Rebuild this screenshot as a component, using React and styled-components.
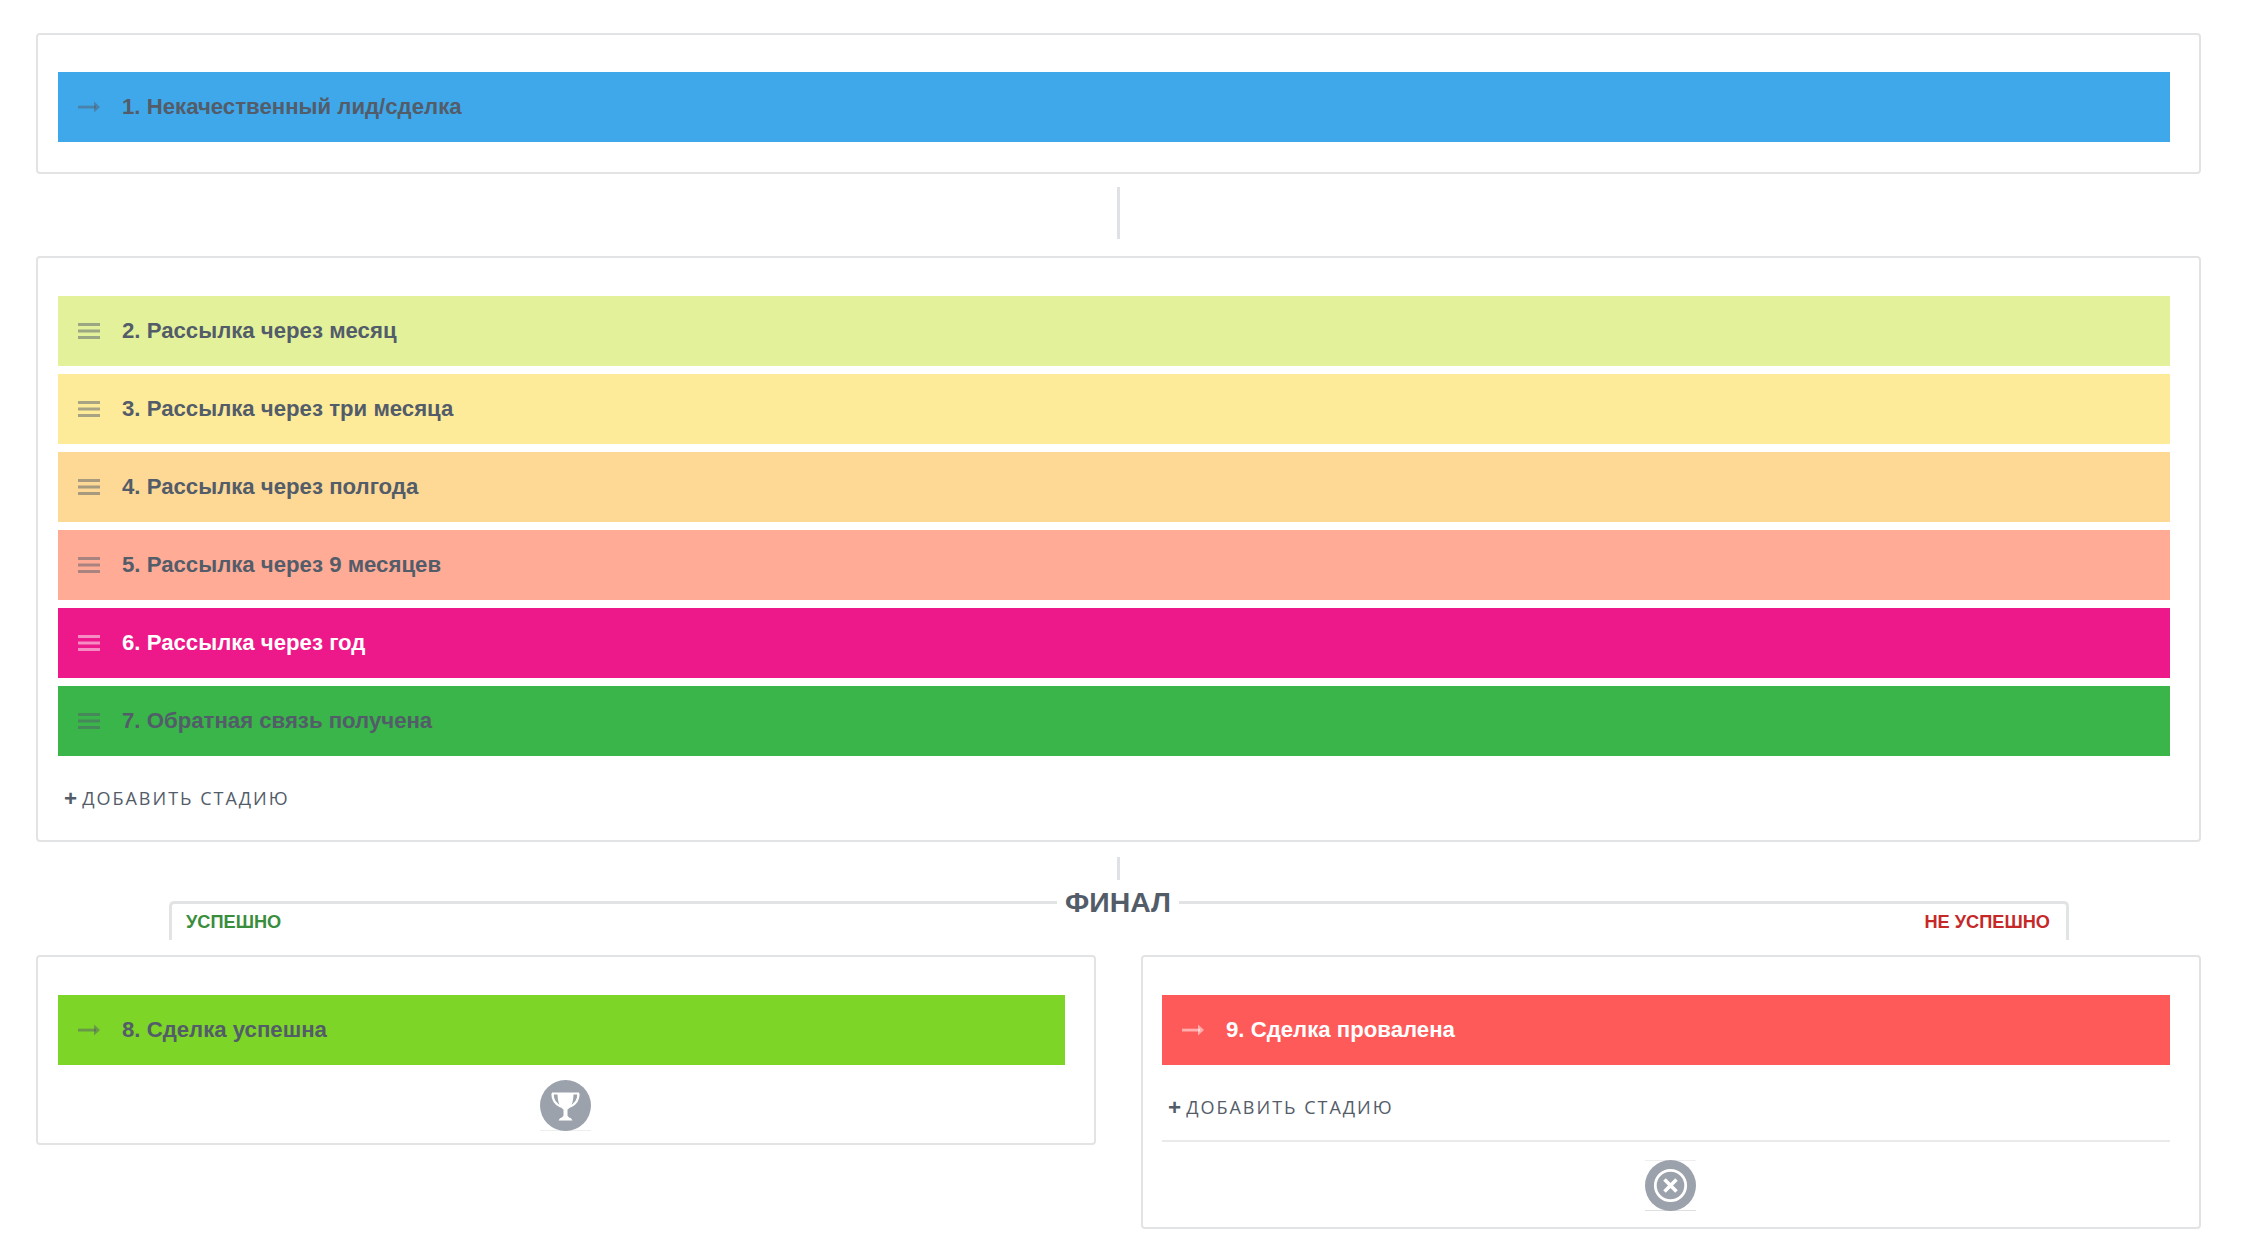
import React from 'react';
import styled, { createGlobalStyle } from 'styled-components';

const GlobalStyle = createGlobalStyle`
  html, body {
    margin: 0;
    padding: 0;
    background: #fff;
    font-family: "Liberation Sans", Arial, sans-serif;
  }
  * {
    box-sizing: border-box;
  }
`;

const Page = styled.div`
  width: 2244px;
  height: 1254px;
  padding: 33px 43px 0 36px;
  overflow: hidden;
`;

const Card = styled.section`
  border: 2px solid #e2e3e5;
  border-radius: 4px;
  background: #fff;
  padding: ${p => p.$top || 38}px 29px ${p => p.$bottom || 29}px ${p => p.$left || 20}px;
`;

const Stack = styled.div`
  display: flex;
  flex-direction: column;
  gap: 8px;
`;

const Bar = styled.div`
  display: flex;
  align-items: center;
  height: 70px;
  padding-left: 20px;
  gap: 22px;
  background: ${p => p.$bg};
  color: ${p => (p.$light ? '#fff' : '#535c69')};
  font-size: 22.2px;
  font-weight: 700;
  white-space: nowrap;
`;

const IconSvg = styled.svg`
  display: block;
  flex: none;
  width: 22px;
  height: 18px;
  color: ${p => (p.$light ? 'rgba(255,255,255,.5)' : 'rgba(83,92,105,.5)')};
`;

const Connector = styled.div`
  width: 3px;
  height: ${p => p.$height}px;
  margin: ${p => p.$top}px auto ${p => p.$bottom}px;
  background: #dfe1e4;
`;

const AddStage = styled.div`
  display: flex;
  align-items: center;
  gap: 5px;
  height: 24px;
  padding-left: 6px;
  margin-top: ${p => p.$top}px;
  color: #535c69;
  font-family: "Open Sans", "Noto Sans", sans-serif;
  font-size: 18px;
  font-weight: 500;
  letter-spacing: 2px;
  white-space: nowrap;
`;

const Plus = styled.span`
  font-size: 23px;
  font-weight: 700;
  letter-spacing: 0;
`;

const FinalHeader = styled.div`
  display: flex;
  align-items: flex-start;
  height: 54px;
  padding: 0 132px 0 133px;
`;

const Tab = styled.div`
  flex: 1;
  height: 39px;
  padding-top: 6px;
  border-top: 3px solid #e2e3e5;
  font-size: 18.2px;
  font-weight: 700;
  line-height: 24px;
  ${p => p.$side === 'left' ? `
    border-left: 3px solid #e2e3e5;
    border-top-left-radius: 5px;
    padding-left: 14px;
    color: #388e3c;
  ` : `
    border-right: 3px solid #e2e3e5;
    border-top-right-radius: 5px;
    padding-right: 16px;
    text-align: right;
    color: #c62828;
  `}
`;

const FinalTitle = styled.div`
  flex: none;
  width: 122px;
  height: 3px;
  line-height: 3px;
  text-align: center;
  color: #535c69;
  font-size: 28.4px;
  font-weight: 700;
`;

const Columns = styled.div`
  display: grid;
  grid-template-columns: 1060px 1060px;
  gap: 45px;
  align-items: start;
`;

// centred on the card, not on the bar: the card padding is uneven
const IconRow = styled.div`
  display: flex;
  justify-content: center;
  margin-top: ${p => p.$top}px;
  margin-right: ${p => p.$shift}px;
`;

const RoundIcon = styled.svg`
  display: block;
  width: 51px;
  height: 51px;
`;

const Divider = styled.div`
  height: 2px;
  margin-top: 21px;
  background: #e9eaeb;
`;

function Burger({ light }) {
  return (
    <IconSvg $light={light} viewBox="0 0 22 18">
      <rect x="0" y="1" width="22" height="3" fill="currentColor" />
      <rect x="0" y="7.5" width="22" height="3" fill="currentColor" />
      <rect x="0" y="14" width="22" height="3" fill="currentColor" />
    </IconSvg>
  );
}

function Arrow({ light }) {
  return (
    <IconSvg $light={light} viewBox="0 0 22 18">
      <rect x="0" y="7.7" width="18" height="2.8" fill="currentColor" />
      <path d="M16 3.6 L22 9.1 L16 14.6 Z" fill="currentColor" />
    </IconSvg>
  );
}

function Trophy() {
  return (
    <RoundIcon viewBox="0 0 51 51">
      <rect x="0" y="50" width="51" height="1" fill="#eeeeee" />
      <circle cx="25.5" cy="25.5" r="25.5" fill="#9ca2ab" />
      <path d="M12.5 13.5c0 6.5 3 11 8.5 13" stroke="#fff" strokeWidth="2.4" fill="none" />
      <path d="M38.5 13.5c0 6.5-3 11-8.5 13" stroke="#fff" strokeWidth="2.4" fill="none" />
      <path d="M12 12.5h27v2H12z" fill="#fff" />
      <path
        d="M17.5 13h16c0 9-2 14-6 16.5v6c.3 1.3 1.5 2 3.5 2.7l1.5 2.3H18.5l1.5-2.3c2-.7 3.2-1.4 3.5-2.7v-6c-4-2.5-6-7.5-6-16.5z"
        fill="#fff"
      />
    </RoundIcon>
  );
}

function Cross() {
  return (
    <RoundIcon viewBox="0 0 51 51">
      <rect x="0" y="0" width="51" height="1" fill="#eeeeee" />
      <rect x="0" y="50" width="51" height="1" fill="#dddee0" />
      <circle cx="25.5" cy="25.5" r="25.5" fill="#9ca2ab" />
      <circle cx="25.5" cy="25.5" r="15.2" fill="none" stroke="#fff" strokeWidth="2.8" />
      <path d="M19.5 19.5l12 12M31.5 19.5l-12 12" stroke="#fff" strokeWidth="3.6" fill="none" />
    </RoundIcon>
  );
}

const stages = [
  { id: 2, text: '2. Рассылка через месяц', bg: '#e3f19b' },
  { id: 3, text: '3. Рассылка через три месяца', bg: '#fdeb9a' },
  { id: 4, text: '4. Рассылка через полгода', bg: '#fdd995' },
  { id: 5, text: '5. Рассылка через 9 месяцев', bg: '#ffab96' },
  { id: 6, text: '6. Рассылка через год', bg: '#ed1889', light: true },
  { id: 7, text: '7. Обратная связь получена', bg: '#39b54a' },
];

export default function App() {
  return (
    <Page>
      <GlobalStyle />
      <Card $top={37} $bottom={30}>
        <Bar $bg="#3fa8eb">
          <Arrow />
          1. Некачественный лид/сделка
        </Bar>
      </Card>

      <Connector $top={13} $height={52} $bottom={17} />

      <Card $bottom={30}>
        <Stack>
          {stages.map(stage => (
            <Bar key={stage.id} $bg={stage.bg} $light={stage.light}>
              <Burger light={stage.light} />
              {stage.text}
            </Bar>
          ))}
        </Stack>
        <AddStage $top={30}><Plus>+</Plus> ДОБАВИТЬ СТАДИЮ</AddStage>
      </Card>

      <Connector $top={15} $height={23} $bottom={21} />

      <FinalHeader>
        <Tab $side="left">УСПЕШНО</Tab>
        <FinalTitle>ФИНАЛ</FinalTitle>
        <Tab $side="right">НЕ УСПЕШНО</Tab>
      </FinalHeader>

      <Columns>
        <Card $bottom={12}>
          <Bar $bg="#7dd527">
            <Arrow />
            8. Сделка успешна
          </Bar>
          <IconRow $top={15} $shift={-8}><Trophy /></IconRow>
        </Card>
        <Card $bottom={16} $left={19}>
          <Bar $bg="#ff5a5a" $light>
            <Arrow light />
            9. Сделка провалена
          </Bar>
          <AddStage $top={30}><Plus>+</Plus> ДОБАВИТЬ СТАДИЮ</AddStage>
          <Divider />
          <IconRow $top={18} $shift={-9}><Cross /></IconRow>
        </Card>
      </Columns>
    </Page>
  );
}
